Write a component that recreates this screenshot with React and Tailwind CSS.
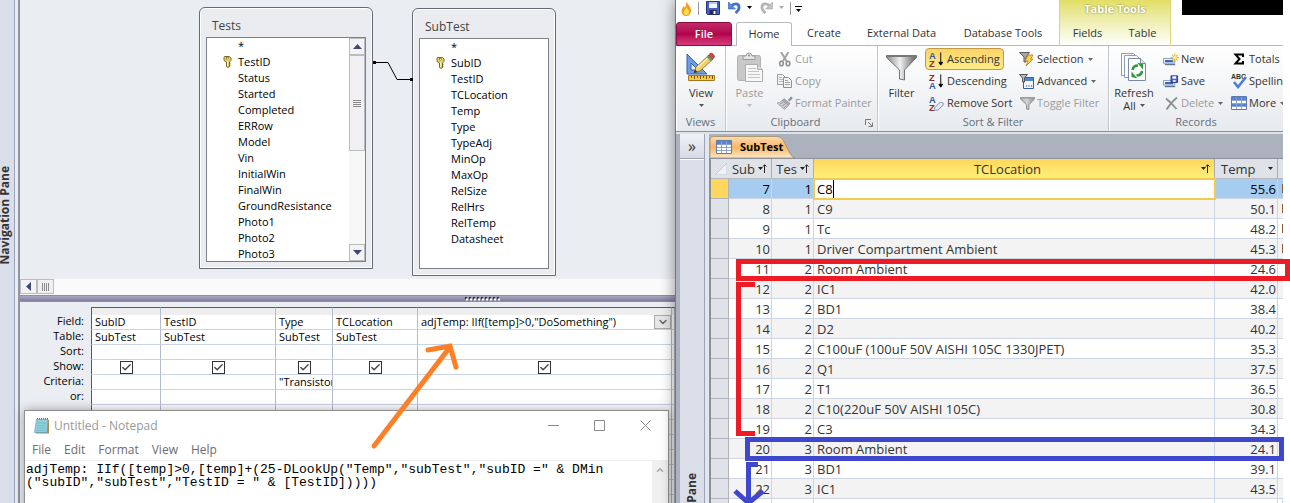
import React, { useState } from 'react';
import { ChevronDown, ChevronUp, Check } from 'lucide-react';

const TESTS_FIELDS = [
    '*', 'TestID', 'Status', 'Started', 'Completed', 'ERRow', 'Model', 'Vin',
    'InitialWin', 'FinalWin', 'GroundResistance', 'Photo1', 'Photo2', 'Photo3',
];

const SUBTEST_FIELDS = [
    '*', 'SubID', 'TestID', 'TCLocation', 'Temp', 'Type', 'TypeAdj',
    'MinOp', 'MaxOp', 'RelSize', 'RelHrs', 'RelTemp', 'Datasheet',
];

const QUERY_COLUMNS = [
    { field: 'SubID', table: 'SubTest', criteria: '' },
    { field: 'TestID', table: 'SubTest', criteria: '' },
    { field: 'Type', table: 'SubTest', criteria: '"Transistor"' },
    { field: 'TCLocation', table: 'SubTest', criteria: '' },
];

const ADJ_TEMP = 'adjTemp: IIf([temp]>0,"DoSomething")';

const NOTE = `adjTemp: IIf([temp]>0,[temp]+(25-DLookUp("Temp","subTest","subID =" & DMin
("subID","subTest","TestID = " & [TestID]))))`;

const ROWS = [
    { id: 7, test: 1, location: 'C8', temp: '55.6', more: true },
    { id: 8, test: 1, location: 'C9', temp: '50.1', more: true },
    { id: 9, test: 1, location: 'Tc', temp: '48.2', more: true },
    { id: 10, test: 1, location: 'Driver Compartment Ambient', temp: '45.3', more: true },
    { id: 11, test: 2, location: 'Room Ambient', temp: '24.6' },
    { id: 12, test: 2, location: 'IC1', temp: '42.0' },
    { id: 13, test: 2, location: 'BD1', temp: '38.4' },
    { id: 14, test: 2, location: 'D2', temp: '40.2' },
    { id: 15, test: 2, location: 'C100uF (100uF 50V AISHI 105C 1330JPET)', temp: '35.3' },
    { id: 16, test: 2, location: 'Q1', temp: '37.5' },
    { id: 17, test: 2, location: 'T1', temp: '36.5' },
    { id: 18, test: 2, location: 'C10(220uF 50V AISHI 105C)', temp: '30.8' },
    { id: 19, test: 2, location: 'C3', temp: '34.3' },
    { id: 20, test: 3, location: 'Room Ambient', temp: '24.1' },
    { id: 21, test: 3, location: 'BD1', temp: '39.1' },
    { id: 22, test: 3, location: 'IC1', temp: '43.5' },
];

/* ---------- icons ---------- */

const KeyIcon = () => (
    <svg width="9" height="12" viewBox="0 0 9 12" className="shrink-0">
        <path d="M1.500.5h5l1.500 1.500v2.500L6.500 6v4.500L5 11.500 3.500 10.500V6L1 4.500v-3z" fill="#e8d465" stroke="#6d5a1c" strokeWidth=".9" />
        <rect x="3.500" y="1.500" width="2" height="1.500" fill="#fff" stroke="#6d5a1c" strokeWidth=".5" />
        <path d="M4.500 5v5" stroke="#fff4a8" />
        <path d="M6 7.500h1.500M6 9.500h1.500" stroke="#6d5a1c" strokeWidth=".8" />
    </svg>
);

const Caret = ({ className = '' }) => (
    <svg width="5" height="3" viewBox="0 0 5 3" className={`shrink-0 ${className}`}>
        <path d="M0 0h5L2.500 3z" fill="currentColor" />
    </svg>
);

const FlameIcon = () => (
    <svg width="11" height="15" viewBox="0 0 11 15">
        <path d="M5.500 0C6 3 10.500 6 10 10c-.3 3-2.300 5-4.700 5S.5 13 .5 10c0-2 1.500-3 2-5 .8.6 1 1 1.200 2C5 5 5.500 3 5.500 0z" fill="#f59a1b" />
        <path d="M5.500 6C6 8 8.500 9 8 11.500 7.700 13.200 6.500 14 5.300 14S2.500 13 2.500 11.300C2.500 9.500 5 8.500 5.500 6z" fill="#ffe14d" />
    </svg>
);

const SaveIcon = () => (
    <svg width="14" height="14" viewBox="0 0 14 14">
        <path d="M.5.5h13v13h-12l-1-1z" fill="#4a5fc4" stroke="#26357f" />
        <path d="M3 1h8v6H3z" fill="#f2f5fc" />
        <path d="M3 1h8v2H3z" fill="#b8c6ee" />
        <path d="M3.500 9h7v4.500h-7z" fill="#222c5c" />
        <path d="M7.500 10h2v3h-2z" fill="#fff" />
    </svg>
);

const UndoIcon = ({ flip }) => (
    <svg width="13" height="13" viewBox="0 0 13 13" className={flip ? '-scale-x-100' : ''}>
        <path d="M3 5.500C6 1.500 11.500 2 11 7c-.2 2-1.500 3.500-3.500 5" fill="none" stroke={flip ? '#b5b5b5' : '#4272c8'} strokeWidth="2.800" />
        <path d="M.5 1v7h7z" fill={flip ? '#c4c4c4' : '#5b8be0'} stroke={flip ? '#a8a8a8' : '#2f5cab'} strokeWidth=".6" />
    </svg>
);

const ViewIcon = () => (
    <svg width="30" height="30" viewBox="0 0 30 30">
        <path d="M1 2v20h20z" fill="#6f9be6" stroke="#2f60b8" />
        <path d="M5 11v7h7z" fill="#e9f1ff" stroke="#2f60b8" />
        <path d="M8 21l2-6L23 3l4 4-13 12z" fill="#f3cf68" stroke="#80652a" strokeWidth=".8" />
        <path d="M11 16L24 4" stroke="#fff0b5" strokeWidth="1.200" />
        <path d="M22 4l2-2.500q1.500-1 3 .5t1.500 3L26 8z" fill="#ce4a43" stroke="#7c3030" strokeWidth=".6" />
        <path d="M20.500 5l4.500 4.500 1.500-1.500L22 3.500z" fill="#6b9a62" />
        <path d="M8 21l1-3.500 2.500 2.500z" fill="#333" />
        <path d="M2.500 23.500h26v5h-26z" fill="#f7c84a" stroke="#a9761b" />
        <path d="M5.500 24v2M8.500 24v3M11.500 24v2M14.500 24v3M17.500 24v2M20.500 24v3M23.500 24v2M26.500 24v3" stroke="#7a5510" />
    </svg>
);

const PasteIcon = () => (
    <svg width="28" height="31" viewBox="0 0 28 31">
        <rect x="1.500" y="3.500" width="23" height="25" rx="2" fill="#c9c9c9" stroke="#b1b1b1" />
        <path d="M7 7.500V4h3q0-3 3-3t3 3h3v3.500z" fill="#e6e6e6" stroke="#9a9a9a" />
        <circle cx="13" cy="3.500" r="1" fill="#888" />
        <path d="M9.500 12.500h12l5 5v12h-17z" fill="#f7f7f7" stroke="#aeaeae" />
        <path d="M21.500 12.500v5h5" fill="#ddd" stroke="#aeaeae" />
        <path d="M12 16.500h8M12 19.500h11M12 22.500h12M12 25.500h12" stroke="#c5c5c5" />
    </svg>
);

const CutIcon = () => (
    <svg width="16" height="15" viewBox="0 0 16 15" fill="none">
        <path d="M4 0l5.500 9M11.500 0L6 9" stroke="#a3a3a3" strokeWidth="2" />
        <ellipse cx="4.500" cy="11.500" rx="1.800" ry="2.300" stroke="#8f8f8f" strokeWidth="1.600" />
        <ellipse cx="11" cy="11.500" rx="1.800" ry="2.300" stroke="#8f8f8f" strokeWidth="1.600" />
    </svg>
);

const CopyIcon = () => (
    <svg width="16" height="14" viewBox="0 0 16 14">
        <path d="M.5.5h5l3 3v7h-8z" fill="#f3f3f3" stroke="#9d9d9d" />
        <path d="M2 3.500h3M2 5.500h4M2 7.500h4" stroke="#b5b5b5" />
        <path d="M6.500 3.500h5l3 3v7h-8z" fill="#f3f3f3" stroke="#8f8f8f" />
        <path d="M8 6.500h3M8 8.500h5M8 10.500h5" stroke="#a5a5a5" />
    </svg>
);

const PainterIcon = () => (
    <svg width="16" height="14" viewBox="0 0 16 14">
        <path d="M11 4l3-3.500 1.800 1.500L12.500 5.500z" fill="#8c8c8c" />
        <path d="M7 2.500l6 5-1.500 2-6.500-5z" fill="#aaa" stroke="#888" strokeWidth=".6" />
        <path d="M5 4.500l6.500 5-4 4L0 7q3 0 5-2.500z" fill="#cfcfcf" stroke="#9b9b9b" strokeWidth=".8" />
        <path d="M3 8l3-1.500M5 10l3-2M7 12l2.500-2.500" stroke="#999" />
    </svg>
);

const FunnelIcon = ({ size = 31, muted }) => (
    <svg width={size} height={size} viewBox="0 0 31 31">
        <defs>
            <linearGradient id={muted ? 'funnelMuted' : 'funnel'} x1="0" x2="1">
                <stop offset="0" stopColor={muted ? '#a9a9a9' : '#8c8c8c'} />
                <stop offset=".45" stopColor={muted ? '#d5d5d5' : '#f0f0f0'} />
                <stop offset="1" stopColor={muted ? '#8f8f8f' : '#5e5e5e'} />
            </linearGradient>
        </defs>
        <path d="M.5 3.500h30v2L18.500 18v10l-5-1V18L.5 5.500z" fill={muted ? 'url(#funnelMuted)' : 'url(#funnel)'} stroke={muted ? '#8f8f8f' : '#747474'} strokeWidth={muted ? 2 : 1} />
        <path d="M1 4h29" stroke={muted ? '#999' : '#777'} strokeWidth="2" />
    </svg>
);

const SortIcon = ({ top, bottom, clear }) => (
    <svg width="17" height="17" viewBox="0 0 17 17" fontFamily="Liberation Sans, sans-serif" fontWeight="700" fontSize="10">
        <text x="0" y="8" fill={top === 'A' ? '#34559f' : '#8b2f33'}>{top}</text>
        <text x="0" y="16" fill={bottom === 'A' ? '#34559f' : '#8b2f33'}>{bottom}</text>
        {clear ? (
            <path d="M6 13l5-5q1-1 3-.5t1 2.500l-5 5q-1 1-3 .5T6 13z" fill="#e6eefb" stroke="#7189b4" />
        ) : (
            <path d="M12.500 1v13M10.500 11.500L12.500 14.500l2-3z" stroke="#000" fill="#000" />
        )}
    </svg>
);

const SelectionIcon = () => (
    <svg width="16" height="16" viewBox="0 0 16 16">
        <path d="M.5 1.500h10L7 6v5H5V6z" fill="#a8a8a8" stroke="#5e5e5e" />
        <path d="M9 4h5l-2.500 4H14l-7 7 2-5H6z" fill="#ffd24a" stroke="#b87a12" strokeWidth=".8" />
    </svg>
);

const AdvancedIcon = () => (
    <svg width="16" height="15" viewBox="0 0 16 15">
        <path d="M4.500 3.500h10v11h-10z" fill="#f4f8ff" stroke="#2e5fb5" />
        <path d="M5 4h9v3H5z" fill="#4f83d8" />
        <path d="M7 12h1.200M9.500 12h1.200M12 12h1.200" stroke="#333" strokeWidth="1.200" />
        <path d="M.5.5h8L5.500 4v4h-2V4z" fill="#bbb" stroke="#555" />
    </svg>
);

const RefreshIcon = () => (
    <svg width="28" height="30" viewBox="0 0 28 30">
        <path d="M1.500 1.500h12l4 4v18h-16z" fill="#fbfcfe" stroke="#8f9bb0" />
        <path d="M4.500 3.500h12l4 4v18h-16z" fill="#fbfcfe" stroke="#8f9bb0" />
        <path d="M8.500 6.500h12l5 5v17h-17z" fill="#fff" stroke="#7b8ba6" />
        <path d="M20.500 6.500v5h5" fill="#dce4f0" stroke="#7b8ba6" />
        <path d="M12.500 18q.5-4.500 5.500-4.500" fill="none" stroke="#2f9a3c" strokeWidth="2.600" />
        <path d="M17 10.500l6 1.500v5.500z" fill="#2f9a3c" />
        <path d="M22 19q-.5 4.500-5.500 4.500" fill="none" stroke="#2f9a3c" strokeWidth="2.600" />
        <path d="M17.500 26.500l-6-1.500v-5.500z" fill="#2f9a3c" />
    </svg>
);

const NewIcon = () => (
    <svg width="17" height="13" viewBox="0 0 17 13">
        <path d="M.5 5.500h12v5H.5z" fill="#fff" stroke="#7d96c4" />
        <path d="M2 7h9v2.500H2z" fill="#3468c0" />
        <path d="M2 12h11" stroke="#3b4f78" />
        <path d="M12.500 0v9M8 4.500h9M9.500 1.500l6 6M15.500 1.500l-6 6" stroke="#f5b920" strokeWidth="1.200" />
        <circle cx="12.500" cy="4.500" r="1.800" fill="#fff3a3" />
    </svg>
);

const SaveRecordIcon = () => (
    <svg width="17" height="13" viewBox="0 0 17 13">
        <path d="M.5 5.500h12v5H.5z" fill="#fff" stroke="#7d96c4" />
        <path d="M2 7h9v2.500H2z" fill="#3468c0" />
        <path d="M2 12h11" stroke="#3b4f78" />
        <path d="M8.500.5h7v7h-7z" fill="#5364bd" stroke="#28357a" />
        <path d="M10 1h4v2.500h-4z" fill="#fff" />
        <path d="M10.500 5h3v2h-3z" fill="#dfe5fb" />
    </svg>
);

const DeleteIcon = () => (
    <svg width="13" height="13" viewBox="0 0 13 13">
        <path d="M1 1.500q5 4 10.500 10.500M12 .5Q6 5 1.500 12.500" stroke="#8d8d8d" strokeWidth="1.800" fill="none" />
    </svg>
);

const SigmaIcon = () => (
    <svg width="12" height="12" viewBox="0 0 12 12">
        <path d="M10 4V1.500H2.500L6.500 6l-4 4.500H10V8" fill="none" stroke="#000" strokeWidth="2" />
    </svg>
);

const SpellingIcon = () => (
    <svg width="16" height="16" viewBox="0 0 16 16">
        <text x="0" y="6" fontFamily="Liberation Sans, sans-serif" fontSize="7" fontWeight="700" fill="#333">ABC</text>
        <path d="M3 9l4 5 8-10" fill="none" stroke="#4a7fd6" strokeWidth="2.600" />
    </svg>
);

const GridIcon = ({ accent }) => (
    <svg width="16" height="14" viewBox="0 0 16 14">
        <path d="M.5.5h15v13H.5z" fill="#fff" stroke="#5c78ad" />
        <path d="M1 1h14v3H1z" fill="#5684cf" />
        {accent && <path d="M1 7h14v3H1z" fill="#5684cf" />}
        <path d="M1 4.500h14M1 7.500h14M1 10.500h14M5.500 1v12M10.500 1v12" stroke="#8ba4cf" />
    </svg>
);

const NotepadIcon = () => (
    <svg width="16" height="16" viewBox="0 0 16 16">
        <path d="M3 2h12v13.500H2z" fill="#b08d49" />
        <path d="M2.500 1.500h11.500L13 14.500H.5z" fill="#8fd0dc" stroke="#5ba2b3" strokeWidth=".7" />
        <path d="M3.500 5h8.500M3 7.500h8.500M3 10h8.500M2.500 12.500H11" stroke="#6bb4c5" strokeWidth=".7" />
        <path d="M3 .5h11" stroke="#667" strokeDasharray="1 1" strokeWidth="1.500" />
    </svg>
);

const WindowGlyph = ({ d }) => (
    <svg width="11" height="11" viewBox="0 0 11 11" fill="none" stroke="#8a8a8a">
        <path d={d} />
    </svg>
);

const SortMark = () => (
    <svg width="9" height="9" viewBox="0 0 9 9" className="shrink-0">
        <path d="M0 3h5L2.500 6z" fill="#222" />
        <path d="M6.500 9V1M5 2.500L6.500.8 8.500 2.500" stroke="#222" fill="none" />
    </svg>
);

const LauncherIcon = () => (
    <svg width="8" height="8" viewBox="0 0 8 8" fill="none" stroke="#777">
        <path d="M.5 6V.5H6M3 3l4 4M7.500 3.500v4h-4" />
    </svg>
);

/* ---------- query designer ---------- */

function FieldList({ title, fields, primary, scroll, className }) {
    return (
        <div className={`absolute flex flex-col rounded-t-md border border-[#646b74] bg-[#ebecef] px-[6px] pb-[6px] shadow-[inset_0_0_0_1px_#fff] ${className}`}>
            <div className="h-[29px] shrink-0 px-1.5 pt-[10px] text-xs leading-4 text-[#444]">{title}</div>
            <div className="flex min-h-0 flex-1 border border-[#7d828a] bg-white">
                <ul className="min-w-0 flex-1 overflow-hidden text-[11px] leading-4 text-black">
                    {fields.map(f => (
                        <li key={f} className="flex h-4 items-center">
                            <span className="flex w-[31px] justify-end pr-[6px]">{f === primary && <KeyIcon />}</span>
                            {f}
                        </li>
                    ))}
                </ul>
                {scroll && (
                    <div className="flex w-4 flex-col bg-[#f7f7f7]">
                        <button aria-label="Scroll up" className="flex h-[17px] items-center justify-center border border-[#b9bcc2] bg-[#f3f3f5]">
                            <svg width="9" height="5"><path d="M0 5h9L4.500 0z" fill="#3d4a77" /></svg>
                        </button>
                        <div className="flex h-24 flex-col items-center justify-center gap-px border border-[#b9bcc2] bg-[#f0f0f2]">
                            {[0, 1, 2, 3].map(i => <i key={i} className="h-px w-2 bg-[#8b8b8b]" />)}
                        </div>
                        <button aria-label="Scroll down" className="mt-auto flex h-[17px] items-center justify-center border border-[#b9bcc2] bg-[#f3f3f5]">
                            <svg width="9" height="5"><path d="M0 0h9L4.500 5z" fill="#3d4a77" /></svg>
                        </button>
                    </div>
                )}
            </div>
        </div>
    );
}

function ShowBox({ label }) {
    return (
        <label className="relative mx-auto block h-[13px] w-[13px]">
            <input type="checkbox" defaultChecked aria-label={`Show ${label}`} className="peer block h-[13px] w-[13px] appearance-none border border-[#333] bg-white" />
            <Check size={11} strokeWidth={3} className="pointer-events-none absolute left-px top-px hidden text-[#444] peer-checked:block" />
        </label>
    );
}

function QueryGrid() {
    const cell = 'h-[15px] border-b border-r border-b-[#c9d3e6] border-r-[#b4bccb] bg-white p-0 pl-[3px]';
    const showCell = 'h-[15px] border-b border-r border-b-[#c9d3e6] border-r-[#b4bccb] bg-white p-0';
    const head = 'h-[15px] p-0 pr-[7px] text-right align-top font-normal leading-[12px]';
    const edge = '[&>td:nth-child(2)]:border-l [&>td:nth-child(2)]:border-l-[#5a5a5a]';
    const blank = QUERY_COLUMNS.map(c => <td key={c.field} className={cell} />);

    return (
        <table className="mt-[5px] w-full table-fixed border-separate border-spacing-0 text-[11px] leading-[14px] text-black">
            <colgroup>
                <col className="w-[71px]" />
                <col className="w-[70px]" />
                <col className="w-[115px]" />
                <col className="w-[57px]" />
                <col className="w-[85px]" />
                <col className="w-[254px]" />
                <col />
            </colgroup>
            <tbody>
                <tr className={edge}>
                    <td className="p-0" />
                    {[0, 1, 2, 3, 4, 5].map(i => (
                        <td key={i} className="h-2 border-r border-t border-r-[#b4bccb] border-t-[#5a5a5a] bg-[#eee] p-0" />
                    ))}
                </tr>
                <tr className={edge}>
                    <th scope="row" className={head}>Field:</th>
                    {QUERY_COLUMNS.map(c => <td key={c.field} className={cell}>{c.field}</td>)}
                    <td className={cell}>
                        <div className="relative h-[14px]">
                            <select aria-label="Field" className="block h-[14px] w-full appearance-none bg-transparent text-[11px] leading-[14px]">
                                <option>{ADJ_TEMP}</option>
                            </select>
                            <span className="pointer-events-none absolute right-0 top-0 flex h-[14px] w-[17px] items-center justify-center border border-[#aaa] bg-[#e6e6e6]">
                                <ChevronDown size={12} strokeWidth={3} className="text-[#666]" />
                            </span>
                        </div>
                    </td>
                    <td className={cell} />
                </tr>
                <tr className={edge}>
                    <th scope="row" className={head}>Table:</th>
                    {QUERY_COLUMNS.map(c => <td key={c.field} className={cell}>{c.table}</td>)}
                    <td className={cell} />
                    <td className={cell} />
                </tr>
                <tr className={edge}>
                    <th scope="row" className={head}>Sort:</th>
                    {blank}
                    <td className={cell} />
                    <td className={cell} />
                </tr>
                <tr className={edge}>
                    <th scope="row" className={head}>Show:</th>
                    {QUERY_COLUMNS.map(c => (
                        <td key={c.field} className={showCell}><ShowBox label={c.field} /></td>
                    ))}
                    <td className={showCell}><ShowBox label="adjTemp" /></td>
                    <td className={cell} />
                </tr>
                <tr className={edge}>
                    <th scope="row" className={head}>Criteria:</th>
                    {QUERY_COLUMNS.map(c => (
                        <td key={c.field} className={`${cell} overflow-hidden whitespace-nowrap`}>{c.criteria}</td>
                    ))}
                    <td className={cell} />
                    <td className={cell} />
                </tr>
                <tr className={edge}>
                    <th scope="row" className={head}>or:</th>
                    {blank}
                    <td className={cell} />
                    <td className={cell} />
                </tr>
                {[0, 1, 2, 3, 4, 5, 6, 7].map(i => (
                    <tr key={i} className={edge}>
                        <th className={head} />
                        {blank}
                        <td className={cell} />
                        <td className={cell} />
                    </tr>
                ))}
            </tbody>
        </table>
    );
}

function Notepad() {
    const [text, setText] = useState(NOTE);

    return (
        <div className="absolute bottom-0 left-[24px] right-[6px] top-[410px] flex flex-col border border-b-0 border-[#8f8f8f] bg-white shadow-[0_0_10px_rgba(0,0,0,0.35)]">
            <div className="flex h-[29px] shrink-0 items-center pl-[9px] text-xs text-[#999]">
                <NotepadIcon />
                <span className="ml-1 flex-1">Untitled - Notepad</span>
                <button aria-label="Minimize" className="flex w-[46px] justify-center"><WindowGlyph d="M0 5.500h11" /></button>
                <button aria-label="Maximize" className="flex w-[46px] justify-center"><WindowGlyph d="M.5.5h10v10H.5z" /></button>
                <button aria-label="Close" className="flex w-[46px] justify-center"><WindowGlyph d="M.5.5l10 10M10.500.5l-10 10" /></button>
            </div>
            <div className="flex h-[20px] shrink-0 items-center gap-[13px] pl-[7px] text-[12px] text-[#6d6d6d]">
                {['File', 'Edit', 'Format', 'View', 'Help'].map(m => <button key={m}>{m}</button>)}
            </div>
            <div className="flex min-h-0 flex-1 border-t border-[#eee]">
                <textarea
                    aria-label="Note"
                    value={text}
                    onChange={(e) => setText(e.target.value)}
                    spellCheck={false}
                    className="min-w-0 flex-1 resize-none overflow-hidden whitespace-pre pl-px pt-0.5 font-['Liberation_Mono',monospace] text-[13px] leading-[13px] text-black outline-none"
                />
                <div className="flex w-4 justify-center bg-[#f0f0f0] pt-1">
                    <ChevronUp size={10} strokeWidth={4} className="text-[#aaa]" />
                </div>
            </div>
        </div>
    );
}

function QueryDesigner() {
    return (
        <section className="relative flex h-full min-w-0 overflow-hidden bg-[#eaeef2]">
            <aside className="flex w-[15px] shrink-0 justify-center overflow-hidden border-r border-[#9aa3b8] bg-[#d9dee8] pr-1 pt-[166px]">
                <span className="h-fit shrink-0 rotate-180 whitespace-nowrap text-[12px] font-bold leading-[14px] text-[#333] [writing-mode:vertical-rl]">Navigation Pane</span>
            </aside>
            <div className="ml-[3px] flex min-w-0 flex-1 flex-col border-l-2 border-[#8f94a0]">
                <div className="h-[279px] shrink-0" />
                <div className="flex h-4 shrink-0 bg-[#fbfafb]">
                    <button aria-label="Scroll left" className="flex h-[15px] w-[17px] items-center justify-center border border-[#b9bcc2] bg-[#f3f3f5]">
                        <svg width="5" height="9"><path d="M5 0v9L0 4.500z" fill="#3d4a77" /></svg>
                    </button>
                    <div className="flex h-[15px] w-[17px] items-center justify-center gap-px border border-[#b9bcc2] bg-[#f0f0f2]">
                        {[0, 1, 2, 3].map(i => <i key={i} className="h-2 w-px bg-[#8b8b8b]" />)}
                    </div>
                </div>
                <div className="flex h-[7px] shrink-0 justify-center border-y border-[#8d909c] bg-linear-to-b from-[#a9a8c2] to-[#7f7e9f]">
                    <svg width="36" height="4" className="ml-[270px] mt-px">
                        <path d="M0 1h36" stroke="#333" strokeWidth="2" strokeDasharray="2 2" />
                        <path d="M1 2.500h35" stroke="#fff" strokeWidth="2" strokeDasharray="2 2" />
                    </svg>
                </div>
                <QueryGrid />
            </div>

            <FieldList title="Tests" fields={TESTS_FIELDS} primary="TestID" scroll className="left-[199px] top-[7px] h-[262px] w-[174px]" />
            <FieldList title="SubTest" fields={SUBTEST_FIELDS} primary="SubID" className="left-[412px] top-[8px] h-[268px] w-[144px]" />
            <svg width="42" height="24" viewBox="0 0 42 24" className="absolute left-[372px] top-[58px]" fill="none" stroke="#000">
                <path d="M1 4.500h15L25 21.500h15" />
                <path d="M1 4.500h3M38 21.500h3" strokeWidth="3" />
            </svg>

            <Notepad />
            <svg width="100" height="115" viewBox="0 0 100 115" className="pointer-events-none absolute left-[365px] top-[339px]" fill="none" stroke="#ff7f27" strokeWidth="5" strokeLinecap="round">
                <path d="M9 107L85 8M63 11L85 7L91 28" />
            </svg>
        </section>
    );
}

/* ---------- datasheet window ---------- */

function SmallButton({ icon, label, caret, muted, active }) {
    return (
        <button className={`flex h-[22px] items-center gap-0.5 whitespace-nowrap rounded-sm border px-[3px] text-[11px] ${muted ? 'text-[#9b9b9b]' : 'text-[#333]'} ${active ? 'border-[#c29b3c] bg-linear-to-b from-[#fbd46a] to-[#ffec85]' : 'border-transparent'}`}>
            <span className="flex w-4 shrink-0 justify-center">{icon}</span>
            {label}
            {caret && <Caret className="ml-0.5 text-[#666]" />}
        </button>
    );
}

function BigButton({ icon, label, second, muted, caret, className }) {
    return (
        <button className={`flex shrink-0 flex-col items-center text-[11px] leading-3 ${muted ? 'text-[#9b9b9b]' : 'text-[#333]'} ${className}`}>
            <span className="flex h-[38px] items-center">{icon}</span>
            <span className="leading-[14px]">{label}</span>
            <span className="flex h-[11px] items-center gap-1">{second}{caret && <Caret className={muted ? 'text-[#bbb]' : 'text-[#555]'} />}</span>
        </button>
    );
}

function RibbonGroup({ name, launcher, className, children }) {
    return (
        <div className={`flex flex-col overflow-hidden border-r border-[#c3c7cd] shadow-[inset_1px_0_0_#fff] ${className}`}>
            <div className="flex h-[68px] pt-0.5">{children}</div>
            <div className="flex h-[17px] items-center text-[11px] text-[#666d7a]">
                <span className="flex-1 text-center">{name}</span>
                {launcher && <button aria-label={`${name} options`} className="mr-1"><LauncherIcon /></button>}
            </div>
        </div>
    );
}

function Ribbon() {
    return (
        <div className="flex h-[86px] shrink-0 border-b border-[#8b8f96] bg-linear-to-b from-white to-[#e7eaee]">
            <RibbonGroup name="Views" className="w-[50px]">
                <BigButton icon={<ViewIcon />} label="View" caret className="w-[50px]" />
            </RibbonGroup>
            <RibbonGroup name="Clipboard" launcher className="w-[152px]">
                <BigButton icon={<PasteIcon />} label="Paste" muted caret className="w-[47px]" />
                <div className="flex flex-col">
                    <SmallButton icon={<CutIcon />} label="Cut" muted />
                    <SmallButton icon={<CopyIcon />} label="Copy" muted />
                    <SmallButton icon={<PainterIcon />} label="Format Painter" muted />
                </div>
            </RibbonGroup>
            <RibbonGroup name="Sort &amp; Filter" className="w-[231px]">
                <BigButton icon={<FunnelIcon />} label="Filter" className="w-[47px]" />
                <div className="flex w-[90px] shrink-0 flex-col items-start">
                    <SmallButton icon={<SortIcon top="A" bottom="Z" />} label="Ascending" active />
                    <SmallButton icon={<SortIcon top="Z" bottom="A" />} label="Descending" />
                    <SmallButton icon={<SortIcon top="A" bottom="Z" clear />} label="Remove Sort" />
                </div>
                <div className="flex flex-col">
                    <SmallButton icon={<SelectionIcon />} label="Selection" caret />
                    <SmallButton icon={<AdvancedIcon />} label="Advanced" caret />
                    <SmallButton icon={<FunnelIcon size={15} muted />} label="Toggle Filter" muted />
                </div>
            </RibbonGroup>
            <RibbonGroup name="Records" className="min-w-0 flex-1 border-r-0">
                <BigButton icon={<RefreshIcon />} label="Refresh" second="All" caret className="w-[50px]" />
                <div className="flex w-[68px] shrink-0 flex-col">
                    <SmallButton icon={<NewIcon />} label="New" />
                    <SmallButton icon={<SaveRecordIcon />} label="Save" />
                    <SmallButton icon={<DeleteIcon />} label="Delete" caret muted />
                </div>
                <div className="flex flex-col">
                    <SmallButton icon={<SigmaIcon />} label="Totals" />
                    <SmallButton icon={<SpellingIcon />} label="Spelling" />
                    <SmallButton icon={<GridIcon accent />} label="More" caret />
                </div>
            </RibbonGroup>
        </div>
    );
}

function TitleAndTabs() {
    const tab = 'h-full border-b border-[#b6babf]';
    return (
        <header className="flex h-[46px] shrink-0 text-[11px] text-[#333]">
            <div className="flex w-[383px] shrink-0 flex-col">
                <div className="flex h-[22px] items-start pl-[5px] pt-px">
                    <button aria-label="App menu"><FlameIcon /></button>
                    <i className="ml-1.5 mt-px h-[13px] w-px bg-[#999]" />
                    <button aria-label="Save" className="ml-[7px]"><SaveIcon /></button>
                    <button aria-label="Undo" className="ml-2 flex items-center gap-1.5"><UndoIcon /><Caret className="text-black" /></button>
                    <button aria-label="Redo" className="ml-2 flex items-center gap-1.5"><UndoIcon flip /><Caret className="text-[#aaa]" /></button>
                    <i className="ml-1.5 mt-px h-[13px] w-px bg-[#999]" />
                    <button aria-label="Customize toolbar" className="ml-1 mt-[5px] flex w-[7px] flex-col items-center gap-0.5">
                        <i className="h-px w-[7px] bg-black" />
                        <Caret className="text-black" />
                    </button>
                </div>
                <nav className="flex h-[24px]">
                    <button className="h-full w-[56px] rounded-t-[3px] border border-[#8c0d45] bg-linear-to-b from-[#c02a68] via-[#b3004f] to-[#d8397c] font-semibold text-white">File</button>
                    <span className={`${tab} w-1`} />
                    <button className="h-full w-[56px] rounded-t-[3px] border border-b-0 border-[#b6babf]">Home</button>
                    <button className={`${tab} w-[64px]`}>Create</button>
                    <button className={`${tab} w-[91px]`}>External Data</button>
                    <button className={`${tab} w-[112px]`}>Database Tools</button>
                </nav>
            </div>
            <div className="flex w-[112px] shrink-0 flex-col border-x border-[#d9d67a] bg-linear-to-b from-[#e2de62] to-white">
                <div className="h-[22px] pt-px text-center text-[11px] font-bold text-white [text-shadow:0_0_2px_#77752a]">Table Tools</div>
                <div className="flex h-[24px]">
                    <button className={`${tab} w-[55px]`}>Fields</button>
                    <button className={`${tab} w-[55px]`}>Table</button>
                </div>
            </div>
            <div className={`${tab} flex-1 pl-[11px]`}>
                <div className="h-[15px] bg-black" />
            </div>
        </header>
    );
}

function Datasheet() {
    const th = 'h-[20px] border-b border-r border-b-[#b4b8bf] border-r-[#a9aeb6] bg-[#dfe2e7] p-0 font-normal';
    const td = 'h-[20px] border-b border-r border-[#ced6e6] p-0';

    return (
        <div className="relative min-h-0 flex-1 overflow-hidden border-l-2 border-t border-[#8b9099] bg-white">
            <table className="w-full table-fixed border-separate border-spacing-0 text-[13px] leading-[18px] text-[#333]">
                <colgroup>
                    <col className="w-[18px]" />
                    <col className="w-[43px]" />
                    <col className="w-[42px]" />
                    <col />
                    <col className="w-[63px]" />
                    <col className="w-[5px]" />
                </colgroup>
                <thead>
                    <tr>
                        <th className={`${th} border-r-0`}>
                            <svg width="12" height="12" className="ml-1"><path d="M12 0v12H0z" fill="#eef2f7" stroke="#c3cbd7" /></svg>
                        </th>
                        <th className={th}><div className="flex items-center justify-end gap-[3px] pr-1">Sub<SortMark /></div></th>
                        <th className={th}><div className="flex items-center justify-end gap-[3px] pr-1">Tes<SortMark /></div></th>
                        <th className={`${th} bg-linear-to-b from-[#ffd65c] to-[#fff07a]`}>
                            <div className="flex items-center pr-1"><span className="flex-1 text-center">TCLocation</span><SortMark /></div>
                        </th>
                        <th className={th}><div className="flex items-center justify-between pl-1.5 pr-1">Temp<Caret className="text-[#222]" /></div></th>
                        <th className={`${th} border-r-0`} />
                    </tr>
                </thead>
                <tbody>
                    {ROWS.map((row, i) => {
                        const current = i === 0;
                        const bg = current ? 'bg-[#a6cdf0] text-black' : i % 2 ? 'bg-[#f3f3f3]' : 'bg-white';
                        return (
                            <tr key={row.id} className={bg}>
                                <th className={`h-[20px] border-b border-r border-[#b0b4bb] p-0 ${current ? 'bg-[#ffd75e]' : 'bg-[#dfe2e7]'}`} />
                                <td className={`${td} pr-px text-right`}>{row.id}</td>
                                <td className={`${td} pr-px text-right`}>{row.test}</td>
                                <td className={current ? 'h-[20px] bg-white p-0 pl-[3px] outline-2 -outline-offset-1 outline-[#f2cb4e]' : `${td} pl-[3px]`}>
                                    <span className={current ? 'border-r border-black' : ''}>{row.location}</span>
                                </td>
                                <td className={`${td} pr-px text-right`}>{row.temp}</td>
                                <td className={`${td} border-r-0`}>{row.more && <i className="ml-[4px] block h-[9px] w-px bg-[#8a5a3c]" />}</td>
                            </tr>
                        );
                    })}
                    <tr>
                        <th className="h-[20px] border-r border-[#b0b4bb] bg-[#dfe2e7] p-0" />
                        <td className={td} />
                        <td className={td} />
                        <td className={td} />
                        <td className={td} />
                        <td className={td} />
                    </tr>
                </tbody>
            </table>
        </div>
    );
}

function AccessWindow() {
    return (
        <section className="relative h-full min-w-0 bg-white pr-[7px] shadow-[0_0_14px_rgba(0,0,0,0.45)]">
            <div className="flex h-full flex-col overflow-hidden border-l border-[#73777e]">
                <TitleAndTabs />
                <Ribbon />
                <div className="flex min-h-0 flex-1 border-t-2 border-[#dfe2e7] bg-[#abb2be] pl-1">
                    <aside className="flex w-[25px] shrink-0 flex-col overflow-hidden border-r border-[#9aa3b8] bg-[#d9dee8]">
                        <button aria-label="Open navigation pane" className="flex h-[25px] shrink-0 items-center justify-center border-b border-[#9aa3b8] bg-linear-to-b from-[#f0f2f5] to-[#d5dae3] text-base leading-4 text-[#333]">»</button>
                        <div className="flex min-h-0 flex-1 justify-center overflow-hidden border-t border-white pt-[313px]">
                            <span className="h-fit shrink-0 rotate-180 whitespace-nowrap text-[12px] font-bold leading-[14px] text-[#333] [writing-mode:vertical-rl]">Navigation Pane</span>
                        </div>
                    </aside>
                    <div className="w-1 shrink-0 bg-[#e3e7ec]" />
                    <div className="flex min-w-0 flex-1 flex-col">
                        <div className="flex h-[24px] shrink-0 items-end">
                            <button className="relative flex h-[22px] w-[86px] items-center gap-2 pl-[7px] text-[11px] font-bold text-black">
                                <svg width="86" height="22" viewBox="0 0 86 22" className="absolute left-0 top-0">
                                    <defs>
                                        <linearGradient id="tabFill" x2="0" y2="1">
                                            <stop offset="0" stopColor="#fbdcae" />
                                            <stop offset=".5" stopColor="#f8b667" />
                                            <stop offset="1" stopColor="#fde9c8" />
                                        </linearGradient>
                                    </defs>
                                    <path d="M1 22V4Q1 .5 4 .5h64q5 0 8 7l5 10q2 4 5 4.500z" fill="url(#tabFill)" stroke="#a58a66" strokeWidth=".8" />
                                </svg>
                                <span className="relative"><GridIcon /></span>
                                <span className="relative">SubTest</span>
                            </button>
                        </div>
                        <Datasheet />
                    </div>
                </div>
            </div>

            {/* hand-drawn marks over the rows */}
            <div className="pointer-events-none absolute left-[61px] right-0 top-[259px] h-[22px] border-5 border-[#ed1c24]" />
            <div className="pointer-events-none absolute left-[61px] top-[282px] h-[154px] w-[19px] border-5 border-r-0 border-[#ed1c24]" />
            <div className="pointer-events-none absolute left-[70px] right-[6px] top-[437px] h-[24px] border-5 border-[#3f48cc]" />
            <svg width="36" height="42" viewBox="0 0 36 42" className="pointer-events-none absolute left-[58px] top-[461px]" fill="none" stroke="#3f48cc" strokeWidth="5">
                <path d="M25 3.500h-9.500V42M2 30l13.500 12L30 30" />
            </svg>
        </section>
    );
}

export default function App() {
    return (
        <main className="grid h-screen grid-cols-[minmax(0,675fr)_minmax(0,615fr)] overflow-hidden bg-white font-['Open_Sans','Noto_Sans',sans-serif]">
            <QueryDesigner />
            <AccessWindow />
        </main>
    );
}
